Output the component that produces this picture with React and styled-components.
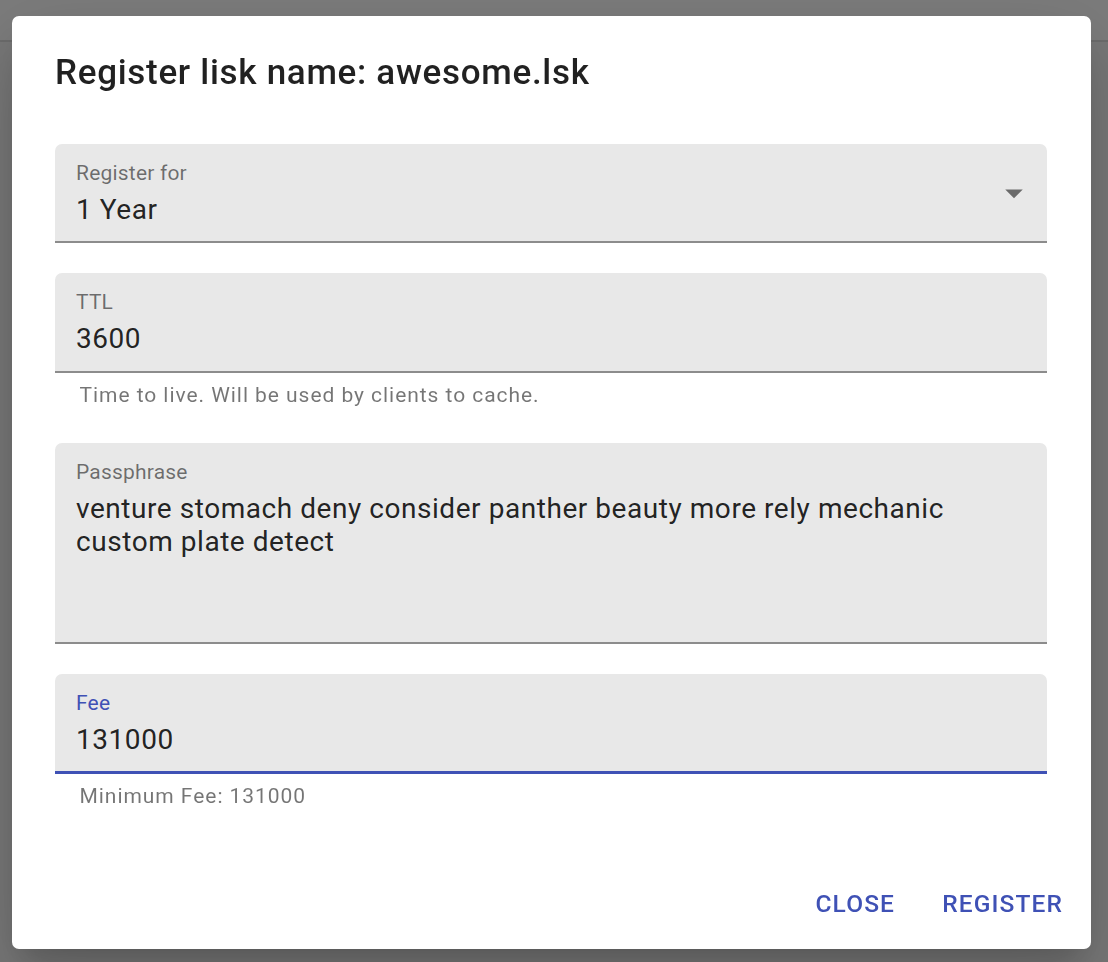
import styled, { createGlobalStyle } from 'styled-components';

const GlobalStyle = createGlobalStyle`
  html, body {
    margin: 0;
    padding: 0;
  }
  body {
    font-family: Roboto, "Liberation Sans", Arial, sans-serif;
    background: #787878;
  }
`;

const Page = styled.div`
  height: 962px;
  background: #787878;
`;

const AppBar = styled.div`
  height: 40px;
  background: #7c7c7c;
  border-bottom: 2px solid #6c6c6c;
`;

const Backdrop = styled.div`
  position: fixed;
  inset: 0;
  display: flex;
  align-items: flex-start;
  padding: 16px 0 0 12px;
`;

const Dialog = styled.div`
  width: 1079px;
  height: 933px;
  background: #fff;
  border-radius: 7px;
  display: flex;
  flex-direction: column;
  box-shadow: 0 19px 26px -12px rgba(0, 0, 0, 0.16),
    0 42px 66px 5px rgba(0, 0, 0, 0.1),
    0 16px 80px 14px rgba(0, 0, 0, 0.08);
`;

const Title = styled.h2`
  margin: 0;
  padding: 29px 43px 27px;
  font-size: 35px;
  font-weight: 500;
  line-height: 56px;
  letter-spacing: 0.7px;
  color: rgba(0, 0, 0, 0.87);
`;

const Content = styled.div`
  padding: 16px 44px 0 43px;
  display: flex;
  flex-direction: column;
  gap: 30px;
`;

const FormControl = styled.div`
  display: flex;
  flex-direction: column;
`;

const Field = styled.div`
  position: relative;
  background: #e8e8e8;
  border-top-left-radius: 7px;
  border-top-right-radius: 7px;
  padding: 49px 21px 17px;
  border-bottom: ${({ $focused }) => ($focused ? '3px solid #3f51b5' : '2px solid #8c8c8c')};
  height: ${({ $height }) => $height}px;
  box-sizing: border-box;
`;

const Label = styled.label`
  position: absolute;
  left: 21px;
  top: 19px;
  font-size: 21px;
  line-height: 1;
  letter-spacing: 0.2px;
  color: ${({ $focused }) => ($focused ? '#3f51b5' : 'rgba(0, 0, 0, 0.54)')};
`;

const Value = styled.div`
  font-size: 28px;
  line-height: 33px;
  color: rgba(0, 0, 0, 0.87);
  letter-spacing: 0.55px;
`;

const Arrow = styled.svg`
  position: absolute;
  right: 12px;
  top: calc(50% - 21px);
  width: 42px;
  height: 42px;
  fill: rgba(0, 0, 0, 0.54);
`;

const Helper = styled.p`
  margin: 5px 0 0 24.5px;
  font-size: 21px;
  line-height: 35px;
  letter-spacing: 0.95px;
  color: rgba(0, 0, 0, 0.54);
`;

const Actions = styled.div`
  margin-top: auto;
  padding: 14px;
  display: flex;
  justify-content: flex-end;
  gap: 17px;
`;

const Button = styled.button`
  min-width: 112px;
  padding: 10px 14px;
  border: none;
  background: transparent;
  font-family: inherit;
  font-size: 24.5px;
  font-weight: 500;
  line-height: 43px;
  letter-spacing: 1.1px;
  text-transform: uppercase;
  color: #3f51b5;
  border-radius: 7px;
  cursor: pointer;
`;

const TextField = ({ label, value, helper, focused, height = 99, select }) => (
  <FormControl>
    <Field $focused={focused} $height={height}>
      <Label $focused={focused}>{label}</Label>
      <Value>{value}</Value>
      {select && (
        <Arrow viewBox="0 0 24 24">
          <path d="M7 10l5 5 5-5z" />
        </Arrow>
      )}
    </Field>
    {helper && <Helper>{helper}</Helper>}
  </FormControl>
);

const App = () => (
  <>
    <GlobalStyle />
    <Page>
      <AppBar />
    </Page>
    <Backdrop>
      <Dialog>
        <Title>Register lisk name: awesome.lsk</Title>
        <Content>
          <TextField label="Register for" value="1 Year" select />
          <TextField label="TTL" value="3600" helper="Time to live. Will be used by clients to cache." height={100} />
          <TextField
            label="Passphrase"
            value="venture stomach deny consider panther beauty more rely mechanic custom plate detect"
            height={201}
          />
          <TextField label="Fee" value="131000" helper="Minimum Fee: 131000" focused height={100} />
        </Content>
        <Actions>
          <Button>Close</Button>
          <Button>Register</Button>
        </Actions>
      </Dialog>
    </Backdrop>
  </>
);

export default App;
